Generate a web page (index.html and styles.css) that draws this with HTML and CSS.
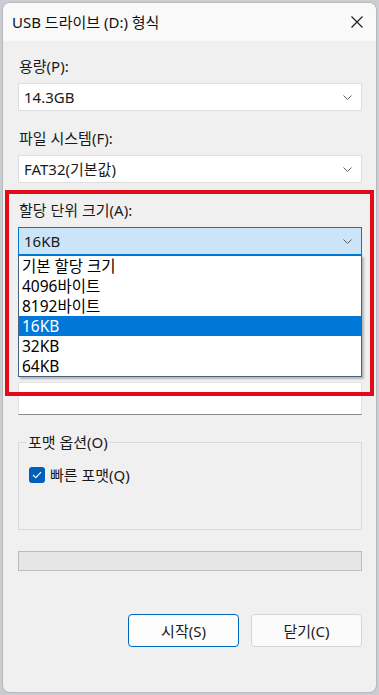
FILE: index.html
```html
<!DOCTYPE html>
<html lang="ko">
<head>
<meta charset="utf-8">
<title>USB 드라이브 (D:) 형식</title>
<link rel="stylesheet" href="styles.css">
</head>
<body>
<div class="window">
  <div class="titlebar">
    <span class="title">USB 드라이브 (D:) 형식</span>
    <span class="close">
      <svg width="12" height="12" viewBox="0 0 12 12"><path d="M0.5 0.5 L11.5 11.5 M11.5 0.5 L0.5 11.5" stroke="#1b1b1b" stroke-width="1.1" fill="none"/></svg>
    </span>
  </div>
  <div class="content">
    <div class="label first">용량(P):</div>
    <div class="combo"><span>14.3GB</span><svg class="chev" width="9" height="5" viewBox="0 0 9 5"><path d="M0.5 0.5 L4.5 4.5 L8.5 0.5" stroke="#5c5c5c" fill="none"/></svg></div>

    <div class="label">파일 시스템(F):</div>
    <div class="combo"><span>FAT32(기본값)</span><svg class="chev" width="9" height="5" viewBox="0 0 9 5"><path d="M0.5 0.5 L4.5 4.5 L8.5 0.5" stroke="#5c5c5c" fill="none"/></svg></div>

    <div class="label">할당 단위 크기(A):</div>
    <div class="combo-wrap">
      <div class="combo active"><span>16KB</span><svg class="chev" width="9" height="5" viewBox="0 0 9 5"><path d="M0.5 0.5 L4.5 4.5 L8.5 0.5" stroke="#5c5c5c" fill="none"/></svg></div>
      <ul class="dropdown">
        <li>기본 할당 크기</li>
        <li>4096바이트</li>
        <li>8192바이트</li>
        <li class="sel">16KB</li>
        <li>32KB</li>
        <li>64KB</li>
      </ul>
    </div>

    <div class="textbox"></div>

    <fieldset class="group">
      <legend>포맷 옵션(O)</legend>
      <label class="check">
        <span class="box"><svg width="10" height="8" viewBox="0 0 10 8"><path d="M1 4 L3.8 6.6 L9 1.2" stroke="#ffffff" stroke-width="1.2" fill="none"/></svg></span>
        <span>빠른 포맷(Q)</span>
      </label>
    </fieldset>

    <div class="progress"></div>

    <div class="buttons">
      <button class="btn primary">시작(S)</button>
      <button class="btn">닫기(C)</button>
    </div>
  </div>
</div>
<div class="highlight"></div>
</body>
</html>
```

FILE: styles.css
```css
html, body {
  margin: 0;
  padding: 0;
}
body {
  background: #c9ccd2;
  width: 379px;
  height: 695px;
  overflow: hidden;
  position: relative;
  font-family: "Noto Sans", "Noto Sans CJK KR", sans-serif;
  color: #1a1a1a;
  font-size: 15px;
}
.window {
  margin: 2px 0 0 2px;
  width: 375px;
  height: 691px;
  box-sizing: border-box;
  border: 1px solid #b9b9b9;
  border-radius: 8px;
  overflow: hidden;
  display: flex;
  flex-direction: column;
  background: #f0f0f0;
}
.titlebar {
  height: 38px;
  flex: none;
  background: #f9f9f9;
  display: flex;
  align-items: center;
  justify-content: space-between;
  padding: 0 13px 0 9px;
}
.title {
  font-size: 15px;
  line-height: 20px;
  color: #111;
}
.close {
  display: flex;
  width: 12px;
  height: 12px;
  margin-top: 0;
}
.content {
  flex: 1;
  padding: 15px 14px 0 15px;
  display: flex;
  flex-direction: column;
}
.label {
  line-height: 20px;
  height: 20px;
  margin-top: 17px;
  margin-bottom: 7px;
  padding-left: 1px;
}
.label.first {
  margin-top: 0;
}
.combo {
  height: 28px;
  box-sizing: border-box;
  background: #ffffff;
  border: 1px solid #dedede;
  display: flex;
  align-items: center;
  justify-content: space-between;
  padding: 0 9px 0 5px;
  line-height: 20px;
}
.combo.active {
  background: #cce4f7;
  border-color: #0078d4;
}
.chev {
  display: block;
}
.combo-wrap {
  position: relative;
}
.dropdown {
  position: absolute;
  left: 0;
  top: 28px;
  width: 344px;
  margin: 0;
  padding: 0;
  list-style: none;
  background: #ffffff;
  border: 1px solid #46627f;
  box-sizing: border-box;
  box-shadow: 2px 2px 2px rgba(0, 0, 0, 0.25);
  z-index: 5;
}
.dropdown li {
  height: 20px;
  line-height: 20px;
  padding-left: 3px;
  font-size: 15.5px;
  color: #000;
}
.dropdown li.sel {
  background: #0078d7;
  color: #ffffff;
}
.textbox {
  margin-top: 127px;
  height: 33px;
  box-sizing: border-box;
  background: #ffffff;
  border: 1px solid #e3e3e3;
  border-bottom: 1px solid #8a8a8a;
}
.group {
  margin: 17px 0 0 0;
  padding: 0 0 44px 10px;
  border: 1px solid #dadada;
  min-width: 0;
}
.group legend {
  padding: 0 1px;
  margin-left: -2px;
  line-height: 20px;
  height: 20px;
}
.check {
  margin-top: 13px;
  display: flex;
  align-items: center;
  gap: 5px;
  height: 20px;
  line-height: 20px;
}
.box {
  width: 16px;
  height: 16px;
  border-radius: 3px;
  background: #005fb8;
  display: flex;
  align-items: center;
  justify-content: center;
}
.box svg {
  display: block;
}
.progress {
  margin-top: 21px;
  height: 20px;
  box-sizing: border-box;
  background: #e6e6e6;
  border: 1px solid #bcbcbc;
}
.buttons {
  margin-top: 43px;
  display: flex;
  justify-content: flex-end;
  gap: 12px;
}
.btn {
  width: 111px;
  height: 33px;
  box-sizing: border-box;
  font-family: "Noto Sans", "Noto Sans CJK KR", sans-serif;
  font-size: 15px;
  color: #1a1a1a;
  background: #fbfbfb;
  border: 1px solid #d5d5d5;
  border-radius: 4px;
  padding: 0;
  line-height: 20px;
}
.btn.primary {
  border: 1px solid #0067c0;
  background: #fdfdfd;
}
.highlight {
  position: absolute;
  left: 5px;
  top: 190px;
  width: 369px;
  height: 206px;
  box-sizing: border-box;
  border: 4px solid #e30b17;
  z-index: 10;
  pointer-events: none;
}
```
